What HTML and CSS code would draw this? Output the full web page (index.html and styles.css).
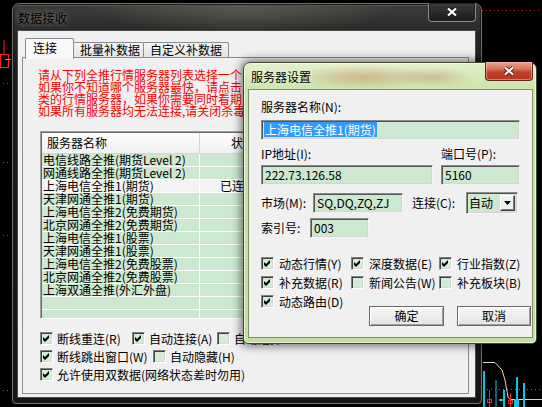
FILE: index.html
```html
<!DOCTYPE html>
<html lang="zh">
<head>
<meta charset="utf-8">
<title>数据接收</title>
<link rel="stylesheet" href="styles.css">
</head>
<body>
<svg class="bgchart" width="542" height="407" viewBox="0 0 542 407">
  <rect x="0.5" y="54.5" width="8" height="13" fill="none" stroke="#ff2020" stroke-width="1"/>
  <line x1="4" y1="40" x2="4" y2="54" stroke="#ff2020"/>
  <line x1="5" y1="59.5" x2="11" y2="59.5" stroke="#00d0e0"/>
  <g fill="#666">
    <rect x="3" y="83" width="1" height="1"/><rect x="7" y="83" width="1" height="1"/>
    <rect x="3" y="162" width="1" height="1"/><rect x="7" y="162" width="1" height="1"/>
    <rect x="3" y="235" width="1" height="1"/><rect x="7" y="235" width="1" height="1"/>
    <rect x="3" y="390" width="1" height="1"/><rect x="7" y="390" width="1" height="1"/>
  </g>
  <line x1="482" y1="10.5" x2="542" y2="10.5" stroke="#b03020" stroke-dasharray="1 3"/>
  <line x1="483" y1="389.5" x2="542" y2="389.5" stroke="#777" stroke-dasharray="1 3"/>
  <polyline points="483,362.5 495,362.5 502,370 505,380 508,397 510,399.5 542,399.5" fill="none" stroke="#e8d6c0" stroke-width="1"/>
  <g stroke="#00c8e8" stroke-width="2">
    <line x1="484" y1="371" x2="484" y2="407"/>
    <line x1="496" y1="380" x2="496" y2="407" stroke-width="1"/>
    <line x1="504" y1="390" x2="504" y2="407"/>
    <line x1="517" y1="377" x2="517" y2="407"/>
    <line x1="524" y1="383" x2="524" y2="407"/>
  </g>
  <rect x="499" y="399" width="6" height="2" fill="#00c8e8"/>
  <rect x="514" y="399" width="5" height="8" fill="#00c8e8"/>
  <g stroke="#ff2020" stroke-width="1" fill="none">
    <line x1="489.5" y1="390" x2="489.5" y2="407"/>
    <rect x="487.5" y="399.5" width="4" height="3"/>
    <line x1="510.5" y1="393" x2="510.5" y2="407"/>
    <rect x="508.5" y="400.5" width="4" height="3"/>
  </g>
</svg>

<div class="win">
  <div class="win-title">
    <span class="win-caption">数据接收</span>
    <span class="win-close">
      <svg width="14" height="10" viewBox="0 0 14 10"><path d="M3 1.5 L11 8.5 M11 1.5 L3 8.5" stroke="#222" stroke-width="4" fill="none"/><path d="M3 1.5 L11 8.5 M11 1.5 L3 8.5" stroke="#fff" stroke-width="2.2" fill="none"/></svg>
    </span>
  </div>
  <div class="win-client">
    <div class="tabs">
      <div class="tab active">连接</div>
      <div class="tab">批量补数据</div>
      <div class="tab">自定义补数据</div>
    </div>
    <div class="panel">
      <div class="notice">
        <div>请从下列全推行情服务器列表选择一个</div>
        <div>如果你不知道哪个服务器最快，请点击</div>
        <div>类的行情服务器，如果你需要同时看期</div>
        <div>如果所有服务器均无法连接,请关闭杀毒</div>
      </div>
      <div class="list">
        <div class="list-head">
          <div class="c1">服务器名称</div>
          <div class="c2">状态</div>
        </div>
        <div class="row"><div class="c1">电信线路全推(期货Level 2)</div><div class="c2"></div></div>
        <div class="row"><div class="c1">网通线路全推(期货Level 2)</div><div class="c2"></div></div>
        <div class="row sel"><div class="c1">上海电信全推1(期货)</div><div class="c2">已连接</div></div>
        <div class="row"><div class="c1">天津网通全推1(期货)</div><div class="c2"></div></div>
        <div class="row"><div class="c1">上海电信全推2(免费期货)</div><div class="c2"></div></div>
        <div class="row"><div class="c1">北京网通全推2(免费期货)</div><div class="c2"></div></div>
        <div class="row"><div class="c1">上海电信全推1(股票)</div><div class="c2"></div></div>
        <div class="row"><div class="c1">天津网通全推1(股票)</div><div class="c2"></div></div>
        <div class="row"><div class="c1">上海电信全推2(免费股票)</div><div class="c2"></div></div>
        <div class="row"><div class="c1">北京网通全推2(免费股票)</div><div class="c2"></div></div>
        <div class="row"><div class="c1">上海双通全推(外汇外盘)</div><div class="c2"></div></div>
        <div class="row"><div class="c1"></div><div class="c2"></div></div>
        <div class="row"><div class="c1"></div><div class="c2"></div></div>
      </div>
      <div class="opts">
        <div class="opt-row">
          <label class="opt w92"><span class="cb"><svg width="9" height="9" viewBox="0 0 9 9"><polygon points="1,3 3,5 7,1 7,4 3,8 1,6"/></svg></span><span class="opt-t">断线重连(R)</span></label>
          <label class="opt w85"><span class="cb"><svg width="9" height="9" viewBox="0 0 9 9"><polygon points="1,3 3,5 7,1 7,4 3,8 1,6"/></svg></span><span class="opt-t">自动连接(A)</span></label>
          <label class="opt"><span class="cb"></span><span class="opt-t">自动选择</span></label>
        </div>
        <div class="opt-row">
          <label class="opt w113"><span class="cb"><svg width="9" height="9" viewBox="0 0 9 9"><polygon points="1,3 3,5 7,1 7,4 3,8 1,6"/></svg></span><span class="opt-t">断线跳出窗口(W)</span></label>
          <label class="opt"><span class="cb"></span><span class="opt-t">自动隐藏(H)</span></label>
        </div>
        <div class="opt-row">
          <label class="opt"><span class="cb"><svg width="9" height="9" viewBox="0 0 9 9"><polygon points="1,3 3,5 7,1 7,4 3,8 1,6"/></svg></span><span class="opt-t">允许使用双数据(网络状态差时勿用)</span></label>
        </div>
      </div>
    </div>
  </div>
</div>

<div class="dlg">
  <div class="dlg-title">
    <span class="dlg-caption">服务器设置</span>
    <span class="dlg-close">
      <svg width="14" height="10" viewBox="0 0 14 10"><path d="M3 1.5 L11 8.5 M11 1.5 L3 8.5" stroke="#5a1a10" stroke-width="4" fill="none"/><path d="M3 1.5 L11 8.5 M11 1.5 L3 8.5" stroke="#fff" stroke-width="2.2" fill="none"/></svg>
    </span>
  </div>
  <div class="dlg-client">
    <div class="lbl">服务器名称(N):</div>
    <div class="field f-name"><span class="hl">上海电信全推1(期货)</span></div>
    <div class="ip-labels"><span class="lbl l-ip">IP地址(I):</span><span class="lbl">端口号(P):</span></div>
    <div class="ip-fields"><div class="field f-ip">222.73.126.58</div><div class="field f-port">5160</div></div>
    <div class="mkt-row">
      <span class="lbl l-mkt">市场(M):</span>
      <div class="field f-mkt">SQ,DQ,ZQ,ZJ</div>
      <span class="lbl l-conn">连接(C):</span>
      <div class="combo"><span class="combo-t">自动</span><span class="drop"><svg width="7" height="4" viewBox="0 0 7 4"><polygon points="0,0 7,0 3.5,4" fill="#000"/></svg></span></div>
    </div>
    <div class="idx-row">
      <span class="lbl l-idx">索引号:</span>
      <div class="field f-idx">003</div>
    </div>
    <div class="chk-row first">
      <label class="opt w90"><span class="cb"><svg width="9" height="9" viewBox="0 0 9 9"><polygon points="1,3 3,5 7,1 7,4 3,8 1,6"/></svg></span><span class="opt-t d">动态行情(Y)</span></label>
      <label class="opt w88"><span class="cb"><svg width="9" height="9" viewBox="0 0 9 9"><polygon points="1,3 3,5 7,1 7,4 3,8 1,6"/></svg></span><span class="opt-t d">深度数据(E)</span></label>
      <label class="opt"><span class="cb"><svg width="9" height="9" viewBox="0 0 9 9"><polygon points="1,3 3,5 7,1 7,4 3,8 1,6"/></svg></span><span class="opt-t d">行业指数(Z)</span></label>
    </div>
    <div class="chk-row">
      <label class="opt w90"><span class="cb"><svg width="9" height="9" viewBox="0 0 9 9"><polygon points="1,3 3,5 7,1 7,4 3,8 1,6"/></svg></span><span class="opt-t d">补充数据(R)</span></label>
      <label class="opt w88"><span class="cb"></span><span class="opt-t d">新闻公告(W)</span></label>
      <label class="opt"><span class="cb"></span><span class="opt-t d">补充板块(B)</span></label>
    </div>
    <div class="last-row">
      <label class="opt"><span class="cb"><svg width="9" height="9" viewBox="0 0 9 9"><polygon points="1,3 3,5 7,1 7,4 3,8 1,6"/></svg></span><span class="opt-t d">动态路由(D)</span></label>
      <div class="btns">
        <button class="btn b-ok">确定</button>
        <button class="btn b-cancel">取消</button>
      </div>
    </div>
  </div>
</div>
</body>
</html>
```

FILE: styles.css
```css
* { box-sizing: border-box; }
html, body { margin: 0; padding: 0; }
body {
  width: 542px;
  height: 407px;
  background: #000;
  position: relative;
  overflow: hidden;
  font-family: "Noto Sans CJK SC", "Noto Sans", sans-serif;
  font-size: 12px;
  color: #000;
}
.bgchart { position: absolute; left: 0; top: 0; }

/* ---------- main window ---------- */
.win {
  position: absolute;
  left: 12px;
  top: 3px;
  width: 470px;
  height: 401px;
  display: flex;
  flex-direction: column;
  padding: 0 5px 5px 4px;
  border: 1px solid #707070;
  border-radius: 7px 7px 4px 4px;
  background:
    radial-gradient(ellipse 160px 30px at 230px 0px, rgba(120,118,105,0.55), rgba(0,0,0,0) 100%),
    linear-gradient(180deg, #3d3d3b 0px, #2a2a29 26px, #1b1b1b 60px, #151515 100%);
  box-shadow: inset 0 0 0 1px #1a1a1a, inset 0 1px 0 1px #555;
}
.win-title {
  height: 26px;
  display: flex;
  align-items: center;
}
.win-caption {
  padding-left: 1px;
  font-size: 12px;
  letter-spacing: 0.3px;
  color: #000;
  text-shadow: 0 0 5px rgba(255,255,255,0.35), 0 0 9px rgba(255,255,255,0.2);
}
.win-close {
  margin-left: auto;
  align-self: flex-start;
  margin-top: -1px;
  width: 48px;
  height: 19px;
  display: flex;
  align-items: center;
  justify-content: center;
  border: 1px solid #8c8c8c;
  border-top: none;
  border-radius: 0 0 4px 4px;
  background: linear-gradient(180deg, #3c3c3c 0%, #2a2a2a 50%, #1c1c1c 100%);
  box-shadow: inset 0 0 0 1px #222;
}
.win-client {
  flex: 1;
  display: flex;
  flex-direction: column;
  background: #f0f0f0;
  border: 1px solid #4a4a4a;
  min-height: 0;
}

/* tabs */
.tabs {
  margin-top: 7px;
  height: 19px;
  padding-left: 7px;
  display: flex;
  align-items: flex-end;
}
.tab {
  height: 15px;
  line-height: 13px;
  padding: 0 6px;
  border: 1px solid #898c95;
  border-bottom: none;
  border-radius: 2px 2px 0 0;
  background: linear-gradient(180deg, #f4f4f4, #e4e4e4);
  white-space: nowrap;
  margin-left: -1px;
}
.tab.active {
  width: 49px;
  height: 21px;
  line-height: 17px;
  padding-left: 7px;
  margin-bottom: -2px;
  margin-left: 0;
  background: #f8f8f8;
  position: relative;
  z-index: 1;
}
.tab:nth-child(2) { width: 71px; }
.tab:nth-child(3) { width: 86px; }

.panel {
  flex: 1;
  margin: 0 6px 3px 4px;
  border: 1px solid #898c95;
  background: #f0f0f0;
  padding: 11px 0 0 15px;
  overflow: hidden;
}
.notice {
  color: #ff0000;
  line-height: 12px;
  white-space: nowrap;
}

/* list */
.list {
  margin: 14px 0 0 2px;
  width: 425px;
  height: 188px;
  overflow: hidden;
  border: 1px solid;
  border-color: #a0a0a0 #fff #fff #a0a0a0;
  box-shadow: inset 1px 1px 0 #696969;
  background: #cce8cf;
  padding: 1px 0 0 1px;
}
.list-head {
  height: 21px;
  display: flex;
  background: linear-gradient(180deg, #fdfdfd, #f1f1f1);
  border-bottom: 1px solid #d5d5d5;
}
.list-head .c1 {
  width: 158px;
  padding-left: 5px;
  line-height: 20px;
  border-right: 1px solid #d5d5d5;
}
.list-head .c2 {
  padding-left: 31px;
  line-height: 20px;
}
.row {
  height: 13px;
  display: flex;
  border-bottom: 1px solid #fff;
  white-space: nowrap;
}
.row .c1 {
  width: 158px;
  padding-left: 1px;
  line-height: 12px;
  border-right: 1px solid #fff;
}
.row .c2 {
  flex: 1;
  padding-left: 20px;
  line-height: 12px;
}
.row.sel { background: #f3f3f3; }

/* option checkboxes */
.opts { margin-top: 13px; margin-left: 2px; }
.opt-row {
  display: flex;
  height: 13px;
  margin-bottom: 5px;
  white-space: nowrap;
}
.opt {
  display: flex;
  align-items: center;
  height: 13px;
  white-space: nowrap;
}
.w92 { width: 92px; }
.w85 { width: 85px; }
.w113 { width: 113px; }
.w90 { width: 90px; }
.w88 { width: 88px; }
.cb {
  width: 13px;
  height: 13px;
  flex: none;
  border: 1px solid;
  border-color: #808080 #fff #fff #808080;
  box-shadow: inset 1px 1px 0 #404040, inset -1px -1px 0 #d8d8d8;
  background: #d3ecd5;
  padding: 1px 0 0 1px;
  display: block;
}
.cb svg { display: block; fill: #000; }
.opt-t { margin-left: 4px; line-height: 13px; }
.opt-t.d { margin-left: 5px; }

/* ---------- server settings dialog ---------- */
.dlg {
  position: absolute;
  left: 243px;
  top: 62px;
  width: 294px;
  height: 282px;
  display: flex;
  flex-direction: column;
  padding: 0 3px 5px 4px;
  border: 1px solid #3e4c33;
  border-radius: 7px 7px 5px 5px;
  background:
    radial-gradient(ellipse 70px 12px at 120px 14px, rgba(196,120,80,0.45), rgba(0,0,0,0) 100%),
    radial-gradient(ellipse 40px 10px at 190px 14px, rgba(196,110,80,0.35), rgba(0,0,0,0) 100%),
    linear-gradient(180deg, #e3f0cf 0px, #d5e9ba 14px, #cde4ad 26px, #c5df9f 100%);
  box-shadow: 0 0 10px 2px rgba(0,0,0,0.55), inset 0 0 0 1px rgba(255,255,255,0.55);
}
.dlg-title {
  height: 26px;
  display: flex;
  align-items: center;
}
.dlg-caption {
  padding-left: 3px;
  color: #000;
  text-shadow: 0 0 5px rgba(255,255,255,0.8);
}
.dlg-close {
  margin-left: auto;
  align-self: flex-start;
  margin-top: -1px;
  width: 48px;
  height: 19px;
  display: flex;
  align-items: center;
  justify-content: center;
  border: 1px solid #5a2a20;
  border-top: none;
  border-radius: 0 0 4px 4px;
  background: linear-gradient(180deg, #e8a592 0%, #d9735a 40%, #c6402a 55%, #b8341e 100%);
  box-shadow: inset 0 0 0 1px rgba(255,200,190,0.5);
}
.dlg-client {
  flex: 1;
  background: #f0f0f0;
  border: 1px solid #7c8e6c;
  padding: 10px 0 0 12px;
  display: flex;
  flex-direction: column;
}
.lbl { line-height: 14px; white-space: nowrap; }
.field {
  height: 20px;
  border: 1px solid;
  border-color: #8a8a8a #f4f4f4 #f4f4f4 #8a8a8a;
  box-shadow: inset 1px 1px 0 #555, inset -1px -1px 0 #d4d4d4;
  background: #cce8cf;
  padding: 1px 0 0 3px;
  line-height: 16px;
  white-space: nowrap;
  overflow: hidden;
}
.f-name { width: 259px; margin-top: 6px; padding-left: 2px; }
.hl {
  display: inline-block;
  background: #3399ff;
  color: #fff;
  line-height: 15px;
  padding: 0 1px;
}
.ip-labels { display: flex; margin-top: 7px; }
.l-ip { width: 180px; }
.ip-fields { display: flex; margin-top: 4px; }
.f-ip { width: 172px; }
.f-port { width: 79px; margin-left: 8px; }
.mkt-row { display: flex; align-items: center; margin-top: 7px; height: 22px; }
.l-mkt { width: 52px; }
.f-mkt { width: 90px; }
.l-conn { width: 54px; margin-left: 9px; }
.combo {
  width: 52px;
  height: 22px;
  border: 1px solid;
  border-color: #8a8a8a #f4f4f4 #f4f4f4 #8a8a8a;
  box-shadow: inset 1px 1px 0 #555, inset -1px -1px 0 #d4d4d4;
  background: #cce8cf;
  display: flex;
  align-items: center;
  padding: 0 2px 0 2px;
}
.combo-t { line-height: 16px; }
.drop {
  margin-left: auto;
  width: 15px;
  height: 16px;
  display: flex;
  align-items: center;
  justify-content: center;
  border: 1px solid;
  border-color: #fff #404040 #404040 #fff;
  box-shadow: inset -1px -1px 0 #808080;
  background: #f0f0f0;
}
.idx-row { display: flex; align-items: center; margin-top: 4px; }
.l-idx { width: 49px; }
.f-idx { width: 59px; }
.chk-row { display: flex; margin-top: 6px; height: 13px; }
.chk-row.first { margin-top: 19px; }
.last-row { display: flex; align-items: flex-start; margin-top: 6px; }
.btns { margin-left: auto; margin-right: 1px; margin-top: 11px; display: flex; gap: 13px; }
.btn {
  height: 20px;
  padding: 0;
  font-family: "Noto Sans CJK SC", "Noto Sans", sans-serif;
  font-size: 12px;
  line-height: 16px;
  color: #000;
  border: 1px solid #6a6a6a;
  box-shadow: inset 1px 1px 0 #fff, inset -1px -1px 0 #a0a0a0;
  background: linear-gradient(180deg, #f6f6f6, #e4e4e4);
  border-radius: 0;
}
.b-ok { width: 75px; }
.b-cancel { width: 74px; }
```
